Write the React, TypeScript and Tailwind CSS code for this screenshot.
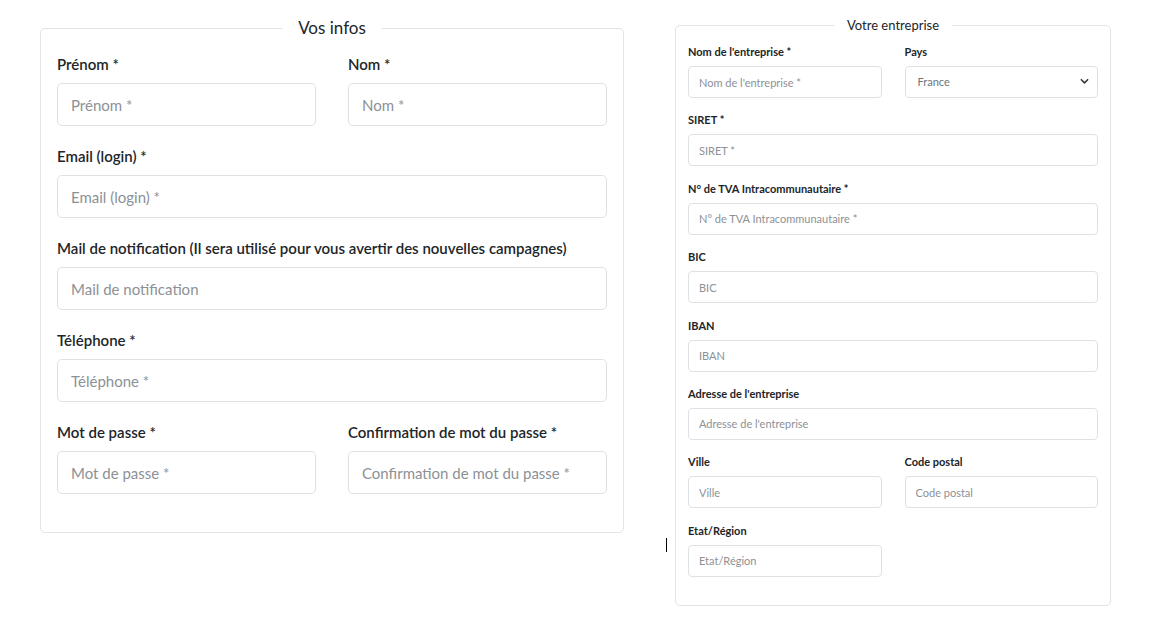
import { useState } from "react";

const font = { fontFamily: "Lato, 'Open Sans', sans-serif" };

type FieldProps = { label: string; placeholder?: string; type?: string };

const BigField = ({ label, placeholder, type = "text" }: FieldProps) => (
  <div className="flex flex-col">
    <label className="text-[15px] leading-5 font-semibold text-[#212529] mb-[9px]">{label}</label>
    <input
      type={type}
      placeholder={placeholder ?? label}
      className="h-[43px] w-full rounded-[5px] border border-[#dee2e6] px-[13px] text-[15px] text-[#495057] placeholder:text-[#8c9196] outline-none"
    />
  </div>
);

const SmallField = ({ label, placeholder, type = "text" }: FieldProps) => (
  <div className="flex flex-col">
    <label className="text-[11px] leading-[14px] font-bold text-[#212529] mb-[7px]">{label}</label>
    <input
      type={type}
      placeholder={placeholder ?? label}
      className="h-[32px] w-full rounded-[4px] border border-[#dee2e6] px-[10px] text-[11px] text-[#495057] placeholder:text-[#8c9196] outline-none"
    />
  </div>
);

export default function App() {
  const [pays, setPays] = useState("France");

  return (
    <div className="relative min-h-screen bg-white flex items-start gap-[51px] pl-[40px] pt-[17px]" style={font}>
      <fieldset className="w-[584px] rounded-[5px] border border-[#e3e3e3] px-[16px] pb-[38px]">
        <legend className="mx-auto px-4 text-[17px] leading-[22px] text-[#212529]">Vos infos</legend>
        <div className="flex flex-col gap-[20px] pt-[15px]">
          <div className="grid grid-cols-2 gap-x-[32px]">
            <BigField label="Prénom *" />
            <BigField label="Nom *" />
          </div>
          <BigField label="Email (login) *" type="email" />
          <BigField
            label="Mail de notification (Il sera utilisé pour vous avertir des nouvelles campagnes)"
            placeholder="Mail de notification"
            type="email"
          />
          <BigField label="Téléphone *" />
          <div className="grid grid-cols-2 gap-x-[32px]">
            <BigField label="Mot de passe *" type="password" />
            <BigField label="Confirmation de mot du passe *" type="password" />
          </div>
        </div>
      </fieldset>

      <fieldset className="w-[436px] rounded-[5px] border border-[#e3e3e3] px-[12px] pb-[28px]">
        <legend className="mx-auto px-[13px] text-[13px] leading-[16px] text-[#212529]">Votre entreprise</legend>
        <div className="flex flex-col gap-[15.4px] pt-[12px]">
          <div className="grid grid-cols-2 gap-x-[23px]">
            <SmallField label="Nom de l'entreprise *" />
            <div className="flex flex-col">
              <label className="text-[11px] leading-[14px] font-bold text-[#212529] mb-[7px]">Pays</label>
              <div className="relative">
                <select
                  value={pays}
                  onChange={(e) => setPays(e.target.value)}
                  className="h-[32px] w-full appearance-none rounded-[4px] border border-[#dee2e6] bg-white px-[12px] text-[11px] text-[#6c757d] outline-none"
                >
                  <option>France</option>
                  <option>Belgique</option>
                  <option>Suisse</option>
                </select>
                <svg
                  className="pointer-events-none absolute right-[9px] top-[12px]"
                  width="9"
                  height="7"
                  viewBox="0 0 10 7"
                  fill="none"
                  stroke="#343a40"
                  strokeWidth="1.8"
                  strokeLinecap="round"
                  strokeLinejoin="round"
                >
                  <path d="M1.5 1.5 5 5l3.5-3.5" />
                </svg>
              </div>
            </div>
          </div>
          <SmallField label="SIRET *" />
          <SmallField label="N° de TVA Intracommunautaire *" />
          <SmallField label="BIC" />
          <SmallField label="IBAN" />
          <SmallField label="Adresse de l'entreprise" />
          <div className="grid grid-cols-2 gap-x-[23px]">
            <SmallField label="Ville" />
            <SmallField label="Code postal" />
          </div>
          <div className="grid grid-cols-2 gap-x-[23px]">
            <SmallField label="Etat/Région" />
          </div>
        </div>
      </fieldset>

      <span className="absolute left-[666px] top-[538px] h-[14px] w-px bg-black" />
    </div>
  );
}
